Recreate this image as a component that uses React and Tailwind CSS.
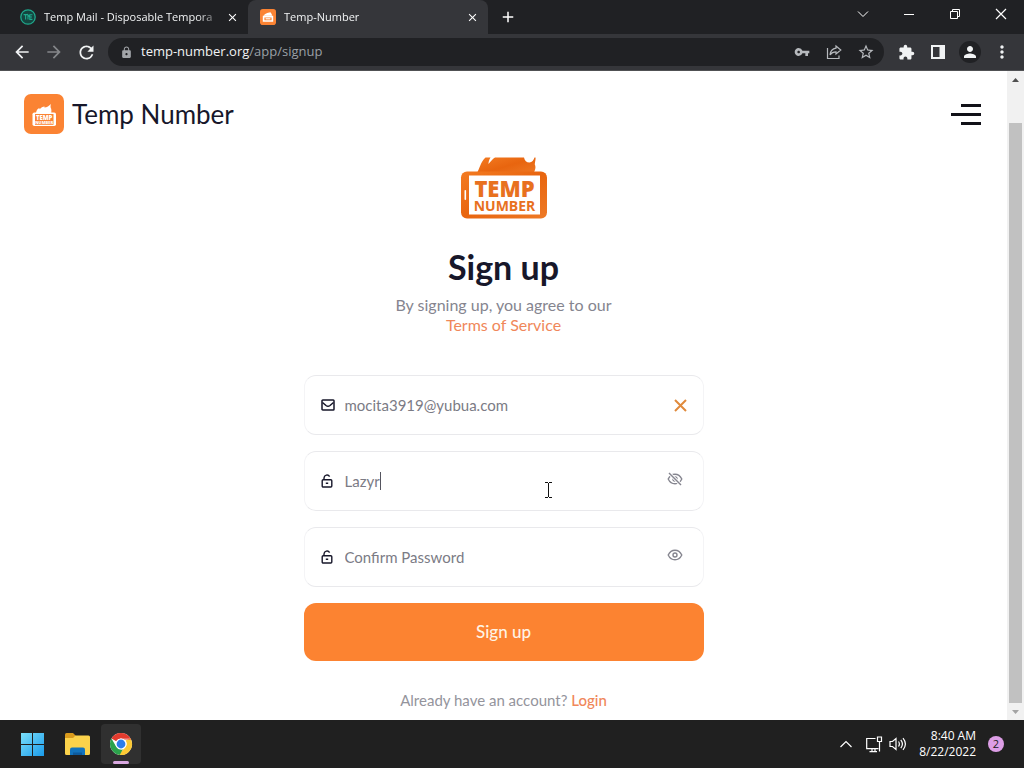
import React, { useState } from "react";
import {
  MdArrowBack,
  MdArrowForward,
  MdRefresh,
  MdLock,
  MdVpnKey,
  MdStarBorder,
  MdExtension,
  MdPerson,
  MdMoreVert,
  MdClose,
  MdAdd,
} from "react-icons/md";

const TempMailIcon = () => (
  <svg width="16" height="16" viewBox="0 0 16 16" className="shrink-0">
    <circle cx="8" cy="8" r="7.2" fill="#14453f" stroke="#1fa88c" strokeWidth="1.3" />
    <path d="M3.6 5.6h4M5.6 5.6v5M8 10.6V6l1.8 2.2M12.4 5.8H9.8v4.6h2.6M10 8h2" fill="none" stroke="#1fa88c" strokeWidth="1.1" />
  </svg>
);

// white burning phone on an orange tile, the small one goes without the name
const AppIcon = ({ className, small }) => (
  <svg viewBox="0 0 40 40" className={className}>
    <rect width="40" height="40" rx="7" fill="#fb8333" />
    {small ? (
      <>
        <path d="M9 17C11 12 15 12 18 10l8-2c2 3 4 4 4 9z" fill="#fff" />
        <path fillRule="evenodd" d="M7 17h26v15H7zM11 21v7h18v-7z" fill="#fff" />
        <path d="M14 23h12v3H14z" fill="#fff" />
      </>
    ) : (
      <>
        <path d="M12 19c.4-2.600 1.400-4.200 3.400-5l.2 1.200c1.400-1.800 3-2.400 5-2.800l-.2 1.200c2.600-.4 4.600-1.600 6.600-3.600-.8 2.400-.4 3.600.2 4.800.4 1.400.2 2.800 0 4.200z" fill="#fff" />
        <rect x="8.500" y="18.500" width="23.500" height="13.500" rx="1.800" fill="#fff" />
        <rect x="11" y="20" width="18.500" height="10.800" fill="#fb8333" />
        <text x="20.200" y="26" textAnchor="middle" fontFamily="Open Sans, sans-serif" fontWeight="800" fontSize="6" fill="#fff">TEMP</text>
        <text x="20.200" y="30.200" textAnchor="middle" fontFamily="Open Sans, sans-serif" fontWeight="800" fontSize="4" fill="#fff">NUMBER</text>
      </>
    )}
  </svg>
);

const PhoneLogo = () => (
  <svg width="88" height="62" viewBox="0 0 88 62">
    <defs>
      <linearGradient id="flame" x1="0" y1="0" x2="1" y2="1">
        <stop offset="0" stopColor="#f37b22" />
        <stop offset="0.5" stopColor="#e8650f" />
        <stop offset="1" stopColor="#ee7a26" />
      </linearGradient>
    </defs>
    <path d="M17 16C19.500 12 20.500 5 25.500 0.500H30.500C29 3 28.500 5 28.500 7C30.500 4.500 32.500 2 35 0.500H64C64.500 3.500 66.500 5.500 69.500 5.500C72 5.500 73.800 3 74.500 0.500H75.500C75.800 3 74.800 5 74.800 7.500C76 10 75.500 12.500 73.500 16V18H17Z" fill="url(#flame)" />
    <rect x="1" y="14.500" width="86" height="47" rx="6" fill="url(#flame)" />
    <rect x="9" y="18.500" width="71" height="39" fill="#fff" />
    <rect x="4.500" y="33" width="1.600" height="10" rx="0.800" fill="#fff" />
    <text x="44.500" y="39.500" textAnchor="middle" fontFamily="Open Sans, sans-serif" fontWeight="800" fontSize="22" fill="#e8711f">TEMP</text>
    <text x="44.500" y="54" textAnchor="middle" fontFamily="Open Sans, sans-serif" fontWeight="700" fontSize="14" fill="#e8711f">NUMBER</text>
  </svg>
);

const MailIcon = () => (
  <svg width="14" height="12" viewBox="0 0 14 12" fill="none" stroke="#17172a" strokeWidth="1.500" strokeLinejoin="round">
    <rect x="1" y="1" width="12" height="10" rx="0.800" />
    <path d="M1.500 3.500 5 6.500Q7 8 9 6.500L12.500 3.500" />
  </svg>
);

const LockIcon = () => (
  <svg width="12" height="14" viewBox="0 0 12 14" fill="none" stroke="#17172a" strokeWidth="1.400">
    <rect x="1.200" y="5.800" width="9.600" height="7.200" rx="1" />
    <path d="M3 5.800V4a3 3 0 0 1 5.600-1.400M4.800 9.200h2.400" />
  </svg>
);

const EyeIcon = ({ off }) => (
  <svg width="16" height="14" viewBox="0 0 16 14" fill="none" stroke="#85858f" strokeWidth="1.400">
    <path d="M1.200 7C2.800 3.700 5.200 2.200 8 2.200S13.200 3.700 14.800 7C13.200 10.300 10.800 11.800 8 11.800S2.800 10.300 1.200 7z" />
    <circle cx="8" cy="7" r="2" />
    {off && <path d="M2 1l12 12" stroke="#fff" strokeWidth="3.200" />}
    {off && <path d="M2 1l12 12" />}
  </svg>
);

const ChromeIcon = () => (
  <svg width="24" height="24" viewBox="0 0 48 48">
    <circle cx="24" cy="24" r="22" fill="#fff" />
    <path d="M24 2a22 22 0 0 1 19.050 11H24a11 11 0 0 0-9.530 5.500L4.950 13A22 22 0 0 1 24 2z" fill="#e33b2e" />
    <path d="M4.950 13l9.520 16.500A11 11 0 0 0 24 35l-5.500 10.300A22 22 0 0 1 4.950 13z" fill="#2ba24c" />
    <path d="M18.500 45.300L33.530 29.500A11 11 0 0 0 33 17l10.050-4A22 22 0 0 1 18.500 45.300z" fill="#fcc934" />
    <path d="M24 13h19.050l.8 2H30z" fill="#e33b2e" />
    <path d="M14.470 29.500A11 11 0 0 0 28 34.200L21.500 45.800 17 44z" fill="#2ba24c" />
    <circle cx="24" cy="24" r="11" fill="#fff" />
    <circle cx="24" cy="24" r="8.800" fill="#2d7de9" />
  </svg>
);

const Tab = ({ icon, title, active }) => (
  <div className={`flex h-[34px] w-60 items-center pl-3 pr-2 ${active ? "rounded-t-lg bg-[#35363a]" : ""}`}>
    {icon}
    <span className="ml-2 flex-1 overflow-hidden whitespace-nowrap text-[11px] font-medium text-[#f1f3f4] [mask-image:linear-gradient(to_right,black_85%,transparent)]">
      {title}
    </span>
    <button type="button" aria-label="Close tab" className="flex size-4 items-center justify-center text-white">
      <MdClose size={13} />
    </button>
  </div>
);

const windowButton = "flex h-7 w-[46px] items-center justify-center";
const toolButton = "flex size-8 items-center justify-center text-[#f1f3f4]";
const urlButton = "flex h-7 w-8 items-center justify-center text-[#b6b9bd]";

const BrowserBar = () => (
  <header className="font-['Open_Sans',sans-serif]">
    <div className="flex bg-[#202124] pl-2">
      <Tab icon={<TempMailIcon />} title="Temp Mail - Disposable Tempora" />
      <Tab active icon={<AppIcon small className="size-4 shrink-0" />} title="Temp-Number" />
      <button type="button" aria-label="New tab" className="flex h-[34px] w-10 items-center justify-center text-white">
        <MdAdd size={18} />
      </button>
      <div className="ml-auto flex text-white">
        <button type="button" aria-label="Search tabs" className={windowButton}>
          <svg width="12" height="8" viewBox="0 0 12 8" fill="none" stroke="currentColor"><path d="M1 1.500l5 5 5-5" /></svg>
        </button>
        <button type="button" aria-label="Minimize" className={windowButton}>
          <svg width="10" height="10" viewBox="0 0 10 10" stroke="currentColor"><path d="M0 5.500h10" /></svg>
        </button>
        <button type="button" aria-label="Restore" className={windowButton}>
          <svg width="10" height="10" viewBox="0 0 10 10" fill="none" stroke="currentColor"><path d="M.5 2.500h7v7h-7zM2.500 2.500v-2h7v7h-2" /></svg>
        </button>
        <button type="button" aria-label="Close" className={windowButton}>
          <svg width="12" height="12" viewBox="0 0 12 12" stroke="currentColor" strokeWidth="1.200"><path d="M1 1l10 10M11 1L1 11" /></svg>
        </button>
      </div>
    </div>

    <div className="flex h-[37px] items-center border-b border-[#505154] bg-[#35363a] px-1.5">
      <button type="button" aria-label="Back" className={toolButton}><MdArrowBack size={20} /></button>
      <button type="button" aria-label="Forward" className="flex size-8 items-center justify-center text-[#85878a]"><MdArrowForward size={20} /></button>
      <button type="button" aria-label="Reload" className={toolButton}><MdRefresh size={21} /></button>
      <div className="mx-1.5 flex h-7 flex-1 items-center rounded-full bg-[#202124] pl-3 pr-0.5">
        <MdLock size={13} className="text-[#a2a5a9]" />
        <div role="textbox" aria-label="Address" className="ml-2 flex-1 text-[13px] text-[#9aa0a6]">
          <span className="font-medium text-[#f1f3f4]">temp-number.org</span>/app/signup
        </div>
        <button type="button" aria-label="Passwords" className={urlButton}><MdVpnKey size={16} /></button>
        <button type="button" aria-label="Share" className={urlButton}>
          <svg width="16" height="16" viewBox="0 0 16 16" fill="none" stroke="currentColor" strokeWidth="1.200">
            <path d="M1.500 4v10.500h11.500v-3" />
            <path d="M10 2l4.800 4L10 10V7.800C7.500 7.800 5.500 8.600 4 10.800c.4-3.600 2.400-6 6-6.600z" />
          </svg>
        </button>
        <button type="button" aria-label="Bookmark" className={urlButton}><MdStarBorder size={18} /></button>
      </div>
      <button type="button" aria-label="Extensions" className={toolButton}><MdExtension size={17} /></button>
      <button type="button" aria-label="Side panel" className={toolButton}>
        <svg width="14" height="14" viewBox="0 0 14 14"><path fillRule="evenodd" d="M0 0h14v14H0zM2 2v10h6.500V2z" fill="currentColor" /></svg>
      </button>
      <button type="button" aria-label="Profile" className={toolButton}>
        <span className="flex size-[22px] items-center justify-center rounded-full bg-[#202124]"><MdPerson size={18} /></span>
      </button>
      <button type="button" aria-label="Menu" className={toolButton}><MdMoreVert size={20} /></button>
    </div>
  </header>
);

const Field = ({ id, label, icon, action, children }) => (
  <div className="relative flex h-[60px] items-center rounded-xl border border-x-[#f4f4f6] border-y-[#e9e9ec] pl-4 pr-5">
    <label htmlFor={id} aria-label={label} className="flex w-6 shrink-0 items-center">{icon}</label>
    <div className="flex flex-1 items-center">{children}</div>
    {action}
  </div>
);

const inputStyle = "bg-transparent text-[15px] text-[#7b7b85] outline-none placeholder:text-[#7b7b85]";

const SignUp = () => {
  const [email, setEmail] = useState("mocita3919@yubua.com");
  const [password, setPassword] = useState("Lazyr");
  const [confirm, setConfirm] = useState("");

  return (
    <form onSubmit={(e) => e.preventDefault()} className="mx-auto flex w-full max-w-[400px] flex-col">
      <div className="flex justify-center"><PhoneLogo /></div>
      <h1 className="mt-7 text-center text-[34px] leading-10 font-bold text-[#17172a]">Sign up</h1>
      <p className="mt-2 text-center text-base leading-5 text-[#85858f]">
        By signing up, you agree to our
        <br />
        <a href="#terms" className="text-[#f0875a]">Terms of Service</a>
      </p>

      <div className="mt-10 flex flex-col gap-4">
        <Field
          id="email"
          label="Email"
          icon={<MailIcon />}
          action={
            <button type="button" aria-label="Clear" onClick={() => setEmail("")} className="-mr-1 flex w-4 items-center justify-end">
              <svg width="13" height="13" viewBox="0 0 13 13" stroke="#e08a3c" strokeWidth="2"><path d="M1 1l11 11M12 1L1 12" /></svg>
            </button>
          }
        >
          <input id="email" type="email" value={email} onChange={(e) => setEmail(e.target.value)} className={`w-full ${inputStyle}`} />
        </Field>
        <Field
          id="password"
          label="Password"
          icon={<LockIcon />}
          action={<button type="button" aria-label="Hide password" className="pb-1"><EyeIcon off /></button>}
        >
          <input id="password" type="text" value={password} onChange={(e) => setPassword(e.target.value)} className={`field-sizing-content ${inputStyle}`} />
          <span className="h-[18px] w-px bg-[#55555f]" />
          {/* text cursor over the field */}
          <svg width="8" height="16" viewBox="0 0 8 16" className="absolute left-60 top-[30px]" fill="none" stroke="#111">
            <path d="M0 .5h3M4 .5h3M0 15.500h3M4 15.500h3M3.500 1v14" />
          </svg>
        </Field>
        <Field
          id="confirm"
          label="Confirm password"
          icon={<LockIcon />}
          action={<button type="button" aria-label="Show password" className="pb-1"><EyeIcon /></button>}
        >
          <input id="confirm" type="text" placeholder="Confirm Password" value={confirm} onChange={(e) => setConfirm(e.target.value)} className={`w-full ${inputStyle}`} />
        </Field>
        <button type="submit" className="h-[58px] rounded-xl bg-[#fc8331] text-[17px] font-medium text-[#fff3e4]">Sign up</button>
      </div>

      <p className="mt-7 text-center text-[15px] text-[#94949c]">
        Already have an account? <a href="#login" className="font-medium text-[#f0875a]">Login</a>
      </p>
    </form>
  );
};

const Scrollbar = () => (
  <div className="flex w-[17px] shrink-0 flex-col bg-[#f1f1f1]">
    <div className="flex h-[17px] items-center justify-center">
      <svg width="7" height="4" viewBox="0 0 7 4"><path d="M0 4L3.500 0 7 4z" fill="#505050" /></svg>
    </div>
    <div className="mx-0.5 mt-[35px] flex-1 bg-[#c1c1c1]" />
    <div className="flex h-[17px] items-center justify-center">
      <svg width="7" height="4" viewBox="0 0 7 4"><path d="M0 0l3.500 4L7 0z" fill="#a3a3a3" /></svg>
    </div>
  </div>
);

const Taskbar = () => (
  <footer className="flex h-12 items-center bg-[#202020] px-3 font-['Open_Sans',sans-serif] text-white">
    <button type="button" aria-label="Start" className="flex size-10 items-center justify-center">
      <svg width="23" height="23" viewBox="0 0 23 23">
        <defs>
          <linearGradient id="win" x1="0" y1="0" x2="1" y2="1">
            <stop offset="0" stopColor="#7be0fb" />
            <stop offset="1" stopColor="#1a9bea" />
          </linearGradient>
        </defs>
        <path d="M0 0h11v11H0zM12 0h11v11H12zM0 12h11v11H0zM12 12h11v11H12z" fill="url(#win)" />
      </svg>
    </button>
    <button type="button" aria-label="File Explorer" className="ml-[5px] flex size-10 items-center justify-center">
      <svg width="25" height="22" viewBox="0 0 25 22">
        <path d="M0 1.500Q0 0 1.500 0H8l2.500 2.500V8H0z" fill="#d99a1c" />
        <path d="M0 5h8l2.500-2.500H23.500Q25 2.500 25 4v16.500Q25 22 23.500 22h-22Q0 22 0 20.500z" fill="#fbd24b" />
        <path d="M5 22v-5.500Q5 14.500 7 14.500H18Q20 14.500 20 16.500V22z" fill="#1273bd" />
        <path d="M8 22v-2.500h9V22z" fill="#0d5a9c" />
      </svg>
    </button>
    <button type="button" aria-label="Chrome" className="relative ml-1 flex size-10 items-center justify-center rounded bg-[#303030]">
      <ChromeIcon />
      <span className="absolute bottom-0 h-[3px] w-4 rounded-full bg-[#d9a8e0]" />
    </button>
    <div className="ml-auto flex items-center">
      <button type="button" aria-label="Show hidden icons">
        <svg width="12" height="8" viewBox="0 0 12 8" fill="none" stroke="currentColor" strokeWidth="1.200"><path d="M.5 7L6 1.500 11.500 7" /></svg>
      </button>
      <button type="button" aria-label="Network" className="ml-3.5">
        <svg width="17" height="17" viewBox="0 0 17 17" fill="none" stroke="currentColor" strokeWidth="1.200">
          <path d="M9.500 2.500H.7v10.200H12.500M3.500 15.700h7.500M6 12.500v3M9 12.500v3" />
          <path d="M11.500 1h4v4.500h-4zM13.500 5.500V15.500" />
        </svg>
      </button>
      <button type="button" aria-label="Volume" className="ml-1.5">
        <svg width="18" height="16" viewBox="0 0 18 16" fill="none" stroke="currentColor" strokeWidth="1.200">
          <path d="M1 5.500h2.500L7 2.500v11L3.500 10.500H1zM9.500 5.500q1.800 2.500 0 5M11.800 3.800q3.200 4.200 0 8.400M14 2.200q4.800 5.800 0 11.600" />
        </svg>
      </button>
      <div className="ml-3 text-right text-xs leading-4">
        <p>8:40 AM</p>
        <p>8/22/2022</p>
      </div>
      <span className="ml-3 mr-2 flex size-4 items-center justify-center rounded-full bg-[#dd9ee6] text-[11px] leading-4 text-[#202020]">2</span>
    </div>
  </footer>
);

const App = () => {
  return (
    <div className="flex min-h-screen flex-col bg-white">
      <BrowserBar />
      <div className="flex flex-1">
        <main className="flex-1 font-[Lato,sans-serif]">
          <div className="flex items-center justify-between pl-6 pr-6.5 pt-[23px]">
            <a href="#home" className="flex items-center gap-2 text-[26px] leading-10 text-[#17172a]">
              <AppIcon className="size-10" />
              Temp Number
            </a>
            <button type="button" aria-label="Open menu" className="flex flex-col items-end gap-1.5">
              <span className="h-[3px] w-5 bg-[#111118]" />
              <span className="h-[3px] w-[30px] bg-[#111118]" />
              <span className="h-[3px] w-5 bg-[#111118]" />
            </button>
          </div>
          <div className="pt-[23px]">
            <SignUp />
          </div>
        </main>
        <Scrollbar />
      </div>
      <Taskbar />
    </div>
  );
};

export default App;
